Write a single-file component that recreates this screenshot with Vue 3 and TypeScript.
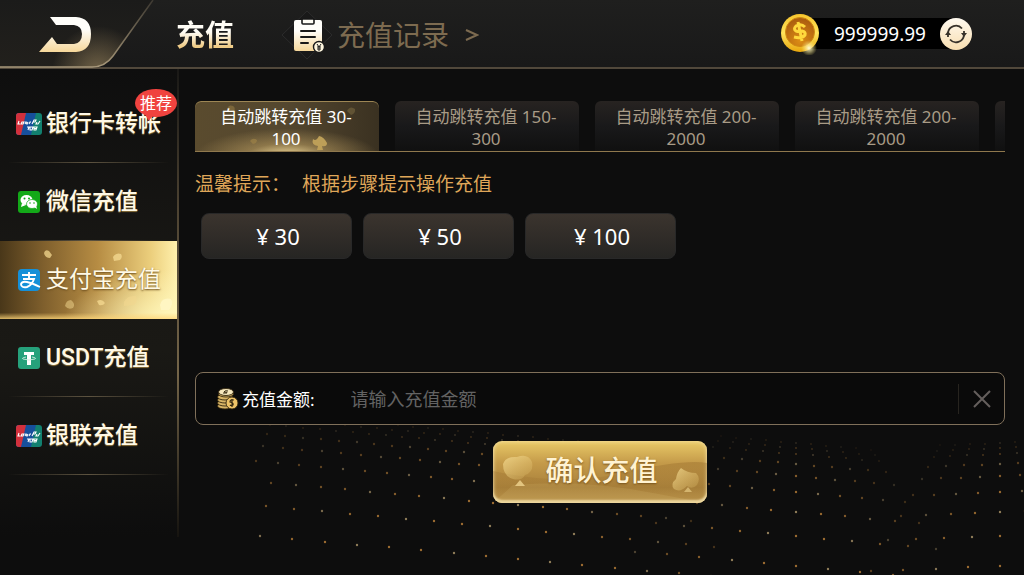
<script setup lang="ts">
import { ref } from 'vue'

interface Channel {
  id: string
  name: string
  icon: 'union' | 'wechat' | 'alipay' | 'usdt'
  tag?: string
}

interface Dot {
  x: number
  y: number
  r: number
  o: number
  warm: boolean
}

const channels: Channel[] = [
  { id: 'card', name: '银行卡转帐', icon: 'union', tag: '推荐' },
  { id: 'wechat', name: '微信充值', icon: 'wechat' },
  { id: 'alipay', name: '支付宝充值', icon: 'alipay' },
  { id: 'usdt', name: 'USDT充值', icon: 'usdt' },
  { id: 'unionpay', name: '银联充值', icon: 'union' },
]
const activeChannel = ref('alipay')

const routes = ['自动跳转充值 30-100', '自动跳转充值 150-300', '自动跳转充值 200-2000', '自动跳转充值 200-2000', '']
const activeRoute = ref(0)

const presets = [30, 50, 100]
const amount = ref('')

// Three fans of dots form the rolling floor behind the form.
const rows = [0, 5, 11, 21, 33, 49, 69, 93, 123]
const fans = [
  { cx: 518, left: 16, right: 7, top: 436, slope: 0.09 },
  { cx: 796, left: 5, right: 5, top: 443, slope: 0.09 },
  { cx: 1000, left: 4, right: 2, top: 443, slope: -0.04 },
]
const dots: Dot[] = []
fans.forEach((fan) => {
  rows.forEach((depth, r) => {
    const step = 15 + depth * 0.14
    for (let k = -fan.left; k <= fan.right; k++) {
      const dx = k * step
      const x = Math.round(fan.cx + dx)
      if (x < 252) continue
      const reach = k < 0 ? fan.left : fan.right
      const fade = 1 - Math.abs(k) / (reach + 1)
      dots.push({
        x,
        y: Math.round(fan.top + depth + dx * fan.slope),
        r: r > 2 ? 1.2 : 0.9,
        o: Math.min(0.85, (0.18 + r * 0.09) * (0.3 + fade)),
        warm: (k + r) % 3 !== 0,
      })
    }
  })
})
</script>

<template>
  <div class="page">
    <svg class="floor" width="1024" height="575" viewBox="0 0 1024 575" aria-hidden="true">
      <circle v-for="(d, i) in dots" :key="i" :cx="d.x" :cy="d.y" :r="d.r" :opacity="d.o" :fill="d.warm ? '#b57d38' : '#a68f66'" />
    </svg>

    <header class="top">
      <button class="back" type="button" aria-label="返回">
        <svg width="160" height="69" viewBox="0 0 160 69">
          <defs>
            <linearGradient id="flap" x1="0" y1="0" x2="0" y2="1">
              <stop offset="0" stop-color="#1b1b1a" />
              <stop offset="1" stop-color="#22201c" />
            </linearGradient>
            <radialGradient id="flapGlow" cx="98" cy="72" r="46" gradientUnits="userSpaceOnUse">
              <stop offset="0" stop-color="#8d7a57" stop-opacity=".75" />
              <stop offset="1" stop-color="#8d7a57" stop-opacity="0" />
            </radialGradient>
            <linearGradient id="edge" x1="0" y1="1" x2="0" y2="0">
              <stop offset="0" stop-color="#a8987a" />
              <stop offset="1" stop-color="#3d3931" />
            </linearGradient>
            <linearGradient id="cream" x1="0" y1="0" x2="0" y2="1">
              <stop offset=".35" stop-color="#fffefa" />
              <stop offset="1" stop-color="#f6d79a" />
            </linearGradient>
          </defs>
          <path d="M0 0H153L113 56Q105 67 92 67H0Z" fill="url(#flap)" />
          <path d="M0 0H153L113 56Q105 67 92 67H0Z" fill="url(#flapGlow)" />
          <path d="M153 0L113 56Q105 67 92 67H0" fill="none" stroke="url(#edge)" stroke-width="1.5" />
          <path d="M50 17H76Q91 18 91 34Q91 51 76 52H39L52 37L57 44H74Q82 43 82 34Q82 26 74 25H56Z" fill="url(#cream)" />
        </svg>
      </button>
      <h1 class="title">充值</h1>
      <a class="history" href="#">
        <svg width="52" height="50" viewBox="0 0 52 50" aria-hidden="true">
          <path d="M26 1L51 25L26 49L1 25Z" fill="#191919" stroke="#2b2b2b" />
          <rect x="13" y="10" width="28" height="31" rx="2" fill="url(#cream)" />
          <rect x="21" y="9" width="12" height="5" rx="1" fill="#fffdf5" stroke="#191919" stroke-width="1.6" />
          <path d="M20 21H34M20 27H34M20 33H27" stroke="#191919" stroke-width="2" stroke-linecap="round" />
          <circle cx="38" cy="37" r="5.5" fill="#fff7df" stroke="#191919" stroke-width="1.4" />
          <path d="M36 34L38 37L40 34M36 37H40M36 39H40M38 37V41" fill="none" stroke="#191919" />
        </svg>
        <span>充值记录</span>
        <svg class="arrow" width="14" height="14" viewBox="0 0 14 14" aria-hidden="true">
          <path d="M1 2L12 7L1 12" fill="none" stroke="currentColor" stroke-width="2" />
        </svg>
      </a>
      <div class="wallet">
        <svg class="coin" width="42" height="42" viewBox="0 0 42 42" aria-hidden="true">
          <defs>
            <linearGradient id="coinRim" x1="0" y1="0" x2="0" y2="1">
              <stop offset="0" stop-color="#f7c52d" />
              <stop offset=".5" stop-color="#ffe45c" />
              <stop offset="1" stop-color="#e8a60d" />
            </linearGradient>
            <radialGradient id="coinFace" cx=".5" cy=".8" r=".8">
              <stop offset="0" stop-color="#dc8d15" />
              <stop offset="1" stop-color="#a8590e" />
            </radialGradient>
            <radialGradient id="spark">
              <stop offset="0" stop-color="#fffbd8" />
              <stop offset="1" stop-color="#ffe96a" stop-opacity="0" />
            </radialGradient>
          </defs>
          <circle cx="20" cy="20" r="19" fill="url(#coinRim)" />
          <circle cx="20" cy="19" r="14.5" fill="url(#coinFace)" stroke="#d08a12" />
          <path d="M25 14Q21 10 16 13Q13 16 16 18Q19 19 22 18Q26 19 25 22Q22 26 14 24M18 9L22 28" fill="none" stroke="#ffd83c" stroke-width="3" />
          <circle cx="29" cy="35" r="8" fill="url(#spark)" />
        </svg>
        <span class="balance">999999.99</span>
        <button class="refresh" type="button" aria-label="刷新余额">
          <svg width="24" height="24" viewBox="0 0 24 24">
            <path d="M4 11A8 8 0 0 1 18 6.500M20 13A8 8 0 0 1 6 17.500M20 13V9M4 11V15" fill="none" stroke="#37322a" stroke-width="1.8" />
            <path d="M17 11H23L20 15ZM1 13H7L4 9Z" fill="#37322a" />
          </svg>
        </button>
      </div>
    </header>

    <div class="body">
      <nav class="side">
        <button
          v-for="c in channels"
          :key="c.id"
          type="button"
          class="channel"
          :class="{ on: activeChannel === c.id }"
          @click="activeChannel = c.id"
        >
          <svg v-if="activeChannel === c.id" class="petals" width="176" height="78" viewBox="0 0 176 78" aria-hidden="true">
            <g fill="#f2d78f">
              <path opacity=".75" d="M44 12Q45 8 49 10L52 14L50 17Q45 17 44 12Z" />
              <path opacity=".8" d="M113 16Q116 11 121 13Q123 16 120 19L114 20Z" />
              <path opacity=".5" d="M65 65Q66 59 71 59Q76 63 73 67Q68 69 65 65Z" />
              <path opacity=".8" d="M97 60Q102 57 105 62Q103 65 99 64Z" />
              <path opacity=".6" d="M124 61Q127 54 136 55Q138 60 134 64L124 65Z" />
              <path opacity=".9" d="M160 64Q162 56 171 58Q174 63 169 69L161 69Z" fill="#fff6c4" />
            </g>
          </svg>
          <svg v-if="c.icon === 'union'" class="logo" width="26" height="22" viewBox="0 0 26 22" aria-hidden="true">
            <rect width="26" height="22" rx="3" fill="#12806f" />
            <path d="M3 0H20L15 22H3Q0 22 0 19V3Q0 0 3 0Z" fill="#164f9c" />
            <path d="M3 0H10L5 22H3Q0 22 0 19V3Q0 0 3 0Z" fill="#d2303c" />
            <path d="M3 8L2 11H4M6 9L5 11H7L8 9ZM9 11L10 9L11 11L12 9M13 11L14 9H15M16 11L18 7H20L19 9H17M21 9L20 11H22L24 8" fill="none" stroke="#fff" stroke-width="1.100" />
            <path d="M11 14H13L12 17M14 14H17L16 17H14ZM18 14H21L20 17H18ZM18 15.500H21" fill="none" stroke="#fff" stroke-width="1.100" />
          </svg>
          <svg v-else-if="c.icon === 'wechat'" class="logo" width="24" height="24" viewBox="0 0 24 24" aria-hidden="true">
            <rect x="1" y="1" width="22" height="22" rx="3" fill="#13a918" />
            <ellipse cx="9.500" cy="10" rx="6" ry="5" fill="#fff" />
            <path d="M5 13L4 17L9 15Z" fill="#fff" />
            <ellipse cx="15" cy="14" rx="5.500" ry="4.500" fill="#fff" stroke="#13a918" stroke-width=".7" />
            <path d="M17 17L20 19L19 15Z" fill="#fff" />
            <g fill="#13a918"><circle cx="7.500" cy="8.500" r="1" /><circle cx="12" cy="8.500" r="1" /><circle cx="13" cy="13" r=".8" /><circle cx="17" cy="13" r=".8" /></g>
          </svg>
          <svg v-else-if="c.icon === 'alipay'" class="logo" width="24" height="24" viewBox="0 0 24 24" aria-hidden="true">
            <rect x="1" y="1" width="22" height="22" rx="4" fill="#1590d8" />
            <path d="M5 7H19M12 4V11M6 11H17Q15 17 10 19Q4 20 4 16Q5 13 10 14Q15 15 23 19" fill="none" stroke="#fff" stroke-width="1.900" />
          </svg>
          <svg v-else class="logo" width="24" height="24" viewBox="0 0 24 24" aria-hidden="true">
            <rect x="1" y="1" width="22" height="22" rx="3" fill="#26a17b" />
            <path d="M7 6H17V9H14V19H10V9H7Z" fill="#fff" />
            <path d="M9 11Q4 12 6 13Q12 15 18 13Q20 12 15 11" fill="none" stroke="#cfeee2" stroke-width=".9" />
          </svg>
          <span class="name">{{ c.name }}</span>
          <span v-if="c.tag" class="tag">{{ c.tag }}</span>
        </button>
      </nav>

      <main class="main">
        <div class="routes">
          <button
            v-for="(r, i) in routes"
            :key="i"
            type="button"
            class="route"
            :class="{ on: activeRoute === i }"
            @click="activeRoute = i"
          >
            <svg v-if="activeRoute === i" class="petals" width="184" height="50" viewBox="0 0 184 50" aria-hidden="true">
              <path d="M118 38Q121 41 124 35Q129 36 132 42Q132 46 127 45L128 49H122L123 45Q116 44 118 38Z" fill="#bd9f58" />
              <path d="M55 40Q58 36 62 39Q62 42 58 43Z" fill="#9d8247" opacity=".7" />
              <path d="M32 9Q33 3 38 5Q41 7 39 10Z" fill="#8a7440" opacity=".7" />
              <path d="M152 10Q155 4 160 8Q161 12 156 14Z" fill="#6f5f3a" opacity=".7" />
            </svg>
            <span>{{ r }}</span>
          </button>
        </div>

        <p class="hint"><span>温馨提示：</span><span>根据步骤提示操作充值</span></p>

        <div class="presets">
          <button v-for="p in presets" :key="p" type="button" class="preset" @click="amount = String(p)">¥ {{ p }}</button>
        </div>

        <form class="form" @submit.prevent>
          <div class="field">
            <svg width="22" height="22" viewBox="0 0 22 22" aria-hidden="true">
              <g fill="#d9b566" stroke="#33270f" stroke-width=".9">
                <ellipse cx="8" cy="18" rx="7.500" ry="3" />
                <ellipse cx="8" cy="15" rx="7.500" ry="3" />
                <ellipse cx="8" cy="12" rx="7.500" ry="3" />
                <ellipse cx="8" cy="9" rx="7.500" ry="3" />
                <ellipse cx="9" cy="6" rx="7.500" ry="3" />
                <ellipse cx="9" cy="4" rx="7.500" ry="3.500" fill="#f5e7bd" />
                <circle cx="15" cy="15" r="6" fill="#efc468" />
              </g>
              <path d="M11 3Q8 2 7 4Q11 4 10 5L6 5" fill="none" stroke="#33270f" />
              <path d="M17 12Q13 11 13 14Q17 15 16 17Q14 18 13 17M15 11V19" fill="none" stroke="#33270f" stroke-width="1.200" />
            </svg>
            <label for="amount">充值金额:</label>
            <input id="amount" v-model="amount" type="text" inputmode="decimal" placeholder="请输入充值金额" />
            <button class="clear" type="button" aria-label="清空" @click="amount = ''">
              <svg width="20" height="20" viewBox="0 0 20 20"><path d="M2 2L18 18M18 2L2 18" stroke="#655f5d" stroke-width="2" /></svg>
            </button>
          </div>
          <button class="submit" type="submit">
            <svg class="petals" width="214" height="62" viewBox="0 0 214 62" aria-hidden="true">
              <defs>
                <linearGradient id="leaf" x1="0" y1="0" x2="1" y2="1">
                  <stop offset="0" stop-color="#f2d990" stop-opacity=".8" />
                  <stop offset="1" stop-color="#dcb965" stop-opacity=".2" />
                </linearGradient>
                <linearGradient id="wave" x1="0" y1="0" x2="0" y2="1">
                  <stop offset="0" stop-color="#8f6427" stop-opacity=".35" />
                  <stop offset="1" stop-color="#8f6427" stop-opacity="0" />
                </linearGradient>
              </defs>
              <path d="M0 30Q70 46 130 32T214 22V52H0Z" fill="url(#wave)" />
              <path d="M20 44Q90 38 160 52L214 62H0Z" fill="#f0d28a" opacity=".12" />
              <path d="M10 23Q13 15 24 16Q35 12 39 21Q41 31 32 34Q29 40 20 38Q10 35 10 23Z" fill="url(#leaf)" />
              <path d="M27 39L32 45H22Z" fill="#f0d590" opacity=".8" />
              <path d="M188 27Q194 32 203 32Q208 37 204 44Q199 49 194 45Q187 52 181 48Q177 43 183 38Q184 31 188 27Z" fill="url(#leaf)" />
              <path d="M195 46L199 51H191Z" fill="#f0d590" opacity=".6" />
            </svg>
            <span>确认充值</span>
          </button>
        </form>
      </main>
    </div>
  </div>
</template>

<style>
body {
  margin: 0;
  background: #0d0d0d;
}
</style>

<style scoped>
.page {
  position: relative;
  display: flex;
  flex-direction: column;
  min-height: 100vh;
  overflow: hidden;
  background: #0d0d0d;
  color: #fff;
  font-family: 'Noto Sans', 'Noto Sans CJK SC', sans-serif;
}
button {
  margin: 0;
  padding: 0;
  border: 0;
  background: none;
  color: inherit;
  font: inherit;
  cursor: pointer;
}
svg {
  display: block;
  flex: none;
}
.floor,
.petals {
  position: absolute;
  top: 0;
  left: 0;
}
.top {
  position: relative;
  display: flex;
  align-items: center;
  height: 67px;
  border-bottom: 2px solid #51483b;
  background: linear-gradient(#1f1f1e, #191919);
}
.back {
  align-self: flex-start;
  height: 67px;
}
.title {
  margin: 0 0 0 16px;
  padding-top: 2px;
  font-size: 29px;
  line-height: 40px;
  font-weight: 700;
  background: linear-gradient(#fffdf6 45%, #efcb85 80%);
  background-clip: text;
  color: transparent;
}
.history {
  display: flex;
  align-items: center;
  margin-left: 47px;
  padding-top: 2px;
  color: #7d6b50;
  font-size: 28px;
  line-height: 40px;
  text-decoration: none;
}
.history span {
  margin-left: 4px;
}
.arrow {
  margin-left: 16px;
}
.wallet {
  display: flex;
  align-items: center;
  margin: 0 52px 0 auto;
}
.coin {
  position: relative;
}
.balance {
  display: flex;
  align-items: center;
  height: 31px;
  margin: 0 -16px 0 -22px;
  padding: 0 30px 0 34px;
  background: #000;
  font-size: 19px;
}
.refresh {
  position: relative;
  display: grid;
  place-items: center;
  width: 32px;
  height: 32px;
  border-radius: 50%;
  background: linear-gradient(#fffaf0, #f8deb0);
}
.body {
  position: relative;
  display: flex;
  flex: 1;
}
.side {
  display: flex;
  flex-direction: column;
  flex: none;
  width: 177px;
  margin-bottom: 38px;
  padding-top: 16px;
  border-right: 2px solid;
  border-image: linear-gradient(#191816, #4d4332 30%, #746549 65%, #15130f) 1;
  background: linear-gradient(#0e0e0e, #181714 40%, #1a1915 60%, #0d0d0d);
}
.channel {
  position: relative;
  display: flex;
  align-items: center;
  height: 78px;
  padding-left: 16px;
  text-align: left;
}
.channel::after {
  content: '';
  position: absolute;
  right: 8px;
  bottom: 0;
  left: 8px;
  height: 1px;
  background: linear-gradient(90deg, transparent, #5d5340 50%, transparent);
}
.channel.on {
  background:
    linear-gradient(transparent 92%, rgb(255 214 120 / 80%)),
    radial-gradient(ellipse at 100% 100%, #fff7bb, transparent 45%),
    linear-gradient(90deg, #493719, #80602d 25%, #b68c43 55%, #ebce7c 85%, #fff0ac);
}
.channel.on::after {
  display: none;
}
.logo {
  position: relative;
  width: 26px;
}
.name {
  position: relative;
  margin-left: 4px;
  color: #fff9e6;
  font-family: Roboto, 'Noto Sans CJK SC', sans-serif;
  font-size: 23px;
  line-height: 32px;
  font-weight: 500;
  white-space: nowrap;
  text-shadow: 0 1px 1px #8b713a;
}
.channel.on .name {
  font-weight: 400;
  text-shadow: 0 1px 2px #6b4d1c;
}
.tag {
  position: absolute;
  top: 4px;
  left: 135px;
  z-index: 1;
  width: 42px;
  height: 28px;
  border-radius: 50%;
  background: #f0433f;
  font-size: 16px;
  line-height: 28px;
  text-align: center;
}
.tag::after {
  content: '';
  position: absolute;
  bottom: -4px;
  left: 9px;
  border: 5px solid transparent;
  border-bottom-width: 0;
  border-top: 8px solid #f0433f;
}
.main {
  flex: 1;
  min-width: 0;
  padding: 32px 19px 0 16px;
}
.routes {
  display: flex;
  gap: 16px;
  overflow: hidden;
  border-bottom: 1px solid #8f784d;
}
.route {
  position: relative;
  flex: none;
  width: 184px;
  height: 50px;
  padding: 3px 18px 0 16px;
  border-radius: 6px 6px 0 0;
  background: linear-gradient(#272321, #19191a 50%, #101010);
  color: #a89b86;
  font-size: 17px;
  line-height: 22px;
}
.route span {
  position: relative;
}
.route.on {
  background:
    radial-gradient(ellipse 50% 55% at 50% 110%, #f3dc9c, rgb(178 150 92 / 60%) 45%, transparent),
    linear-gradient(90deg, #5a4b2e, #54472f 50%, #3a3121);
  box-shadow: inset 0 1px #9d8654;
  color: #fff;
}
.hint {
  display: flex;
  gap: 12px;
  margin: 19px 0 0;
  color: #dfa659;
  font-size: 19px;
  line-height: 26px;
}
.presets {
  display: flex;
  flex-wrap: wrap;
  align-content: flex-start;
  gap: 11px;
  min-height: 159px;
  margin: 16px 0 0 6px;
}
.preset {
  width: 151px;
  height: 46px;
  padding-left: 3px;
  border: 1px solid #282828;
  border-radius: 8px;
  background: linear-gradient(#3b342e, #262523);
  font-size: 22px;
}
.form {
  display: flex;
  flex-direction: column;
  align-items: center;
  gap: 16px;
}
.field {
  display: flex;
  align-items: center;
  box-sizing: border-box;
  width: 100%;
  height: 53px;
  padding-left: 21px;
  border: 1px solid #80705a;
  border-radius: 8px;
  background: #0a0a0a;
}
.field label {
  margin-left: 3px;
  font-size: 17px;
}
.field input {
  flex: 1;
  min-width: 0;
  margin-left: 36px;
  padding: 0;
  border: 0;
  outline: 0;
  background: none;
  color: #fff;
  font: inherit;
  font-size: 18px;
}
.field input::placeholder {
  color: #636363;
  opacity: 1;
}
.clear {
  display: grid;
  place-items: center;
  width: 46px;
  height: 30px;
  border-left: 1px solid #27241f;
}
.submit {
  position: relative;
  width: 214px;
  height: 62px;
  padding: 0 0 4px 3px;
  overflow: hidden;
  border-radius: 9px;
  background: linear-gradient(#e9ca67, #c59b4a 35%, #a8803a 75%, #b9924a);
  box-shadow:
    inset 0 0 4px #f7e4ad,
    inset 0 -3px 2px #e5cf97;
  font-size: 28px;
  line-height: 58px;
  font-weight: 500;
}
.submit span {
  position: relative;
  color: #fff3d2;
  text-shadow: 0 1px 2px #7a541b;
}
</style>
